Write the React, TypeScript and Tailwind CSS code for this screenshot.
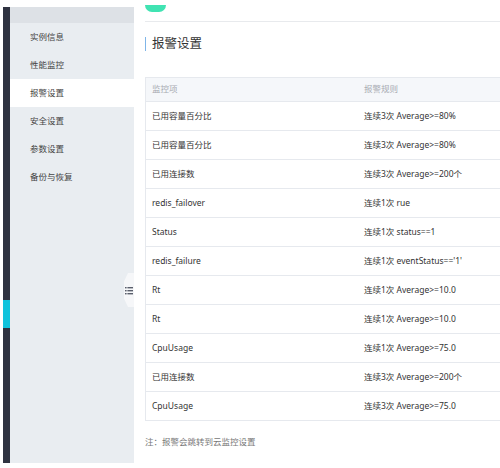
import React from "react";

const rows: [string, string][] = [
  ["已用容量百分比", "连续3次 Average>=80%"],
  ["已用容量百分比", "连续3次 Average>=80%"],
  ["已用连接数", "连续3次 Average>=200个"],
  ["redis_failover", "连续1次 rue"],
  ["Status", "连续1次 status==1"],
  ["redis_failure", "连续1次 eventStatus=='1'"],
  ["Rt", "连续1次 Average>=10.0"],
  ["Rt", "连续1次 Average>=10.0"],
  ["CpuUsage", "连续1次 Average>=75.0"],
  ["已用连接数", "连续3次 Average>=200个"],
  ["CpuUsage", "连续3次 Average>=75.0"],
];

const menu = ["实例信息", "性能监控", "报警设置", "安全设置", "参数设置", "备份与恢复"];

export default function App() {
  return (
    <div
      className="w-[500px] h-[468px] bg-white flex overflow-hidden relative"
      style={{ fontFamily: '"Noto Sans", "Noto Sans CJK SC", sans-serif' }}
    >
      {/* left dark strip */}
      <div className="ml-[3px] mt-[7px] h-[456px] w-[7px] bg-[#2f3341] flex flex-col shrink-0">
        <div className="h-[293px]" />
        <div className="h-[28px] bg-[#10c3dc]" />
      </div>
      {/* sidebar */}
      <div className="mt-[7px] h-[456px] w-[124px] bg-[#e9edf1] flex flex-col shrink-0 relative">
        <div className="h-[16px] bg-[#dde1e6]" />
        {menu.map((m, i) => (
          <div
            key={m}
            className={`h-[28px] flex items-center pl-[20px] text-[8.5px] text-[#444] ${i === 2 ? "bg-white" : ""}`}
          >
            {m}
          </div>
        ))}
        {/* collapse tab */}
        <div className="absolute right-0 top-[266px] w-[10px] h-[34px] bg-[#f6f7f9] [clip-path:polygon(40%_0,100%_0,100%_100%,40%_100%,0_75%,0_25%)] flex items-center justify-end pr-[1px]">
          <svg width="8" height="9" viewBox="0 0 8 9">
            <rect x="0" y="1" width="1.6" height="1.4" fill="#5a5f6c" />
            <rect x="2.4" y="1" width="5.6" height="1.4" fill="#5a5f6c" />
            <rect x="0" y="4" width="1.6" height="1.4" fill="#5a5f6c" />
            <rect x="2.4" y="4" width="5.6" height="1.4" fill="#5a5f6c" />
            <rect x="0" y="7" width="1.6" height="1.4" fill="#5a5f6c" />
            <rect x="2.4" y="7" width="5.6" height="1.4" fill="#5a5f6c" />
          </svg>
        </div>
      </div>
      {/* main */}
      <div className="flex-1 pl-[11px] flex flex-col min-w-0">
        <div className="h-[22px] border-b border-[#e8eaed] flex items-start">
          <div className="mt-[5px] w-[21px] h-[7px] bg-[#40e3b2] rounded-b-full" />
        </div>
        <div className="mt-[15px] h-[14px] flex items-center border-l border-[#7fb5e8] pl-[6px] text-[12.5px] text-[#333] leading-none">
          报警设置
        </div>
        <div className="mt-[26px] w-[380px] border-l border-t border-[#e6e9ee]">
          <div className="h-[24px] bg-[#f5f7fa] border-b border-[#e6e9ee] flex items-center text-[8.5px] text-[#a8abb2]">
            <div className="w-[218px] pl-[6px]">监控项</div>
            <div>报警规则</div>
          </div>
          {rows.map((r, i) => (
            <div
              key={i}
              className="h-[29px] border-b border-[#e6e9ee] flex items-center text-[8.5px] text-[#333]"
            >
              <div className="w-[218px] pl-[6px]">{r[0]}</div>
              <div>{r[1]}</div>
            </div>
          ))}
        </div>
        <div className="mt-[15px] text-[8.5px] text-[#777]">注：报警会跳转到云监控设置</div>
      </div>
    </div>
  );
}
